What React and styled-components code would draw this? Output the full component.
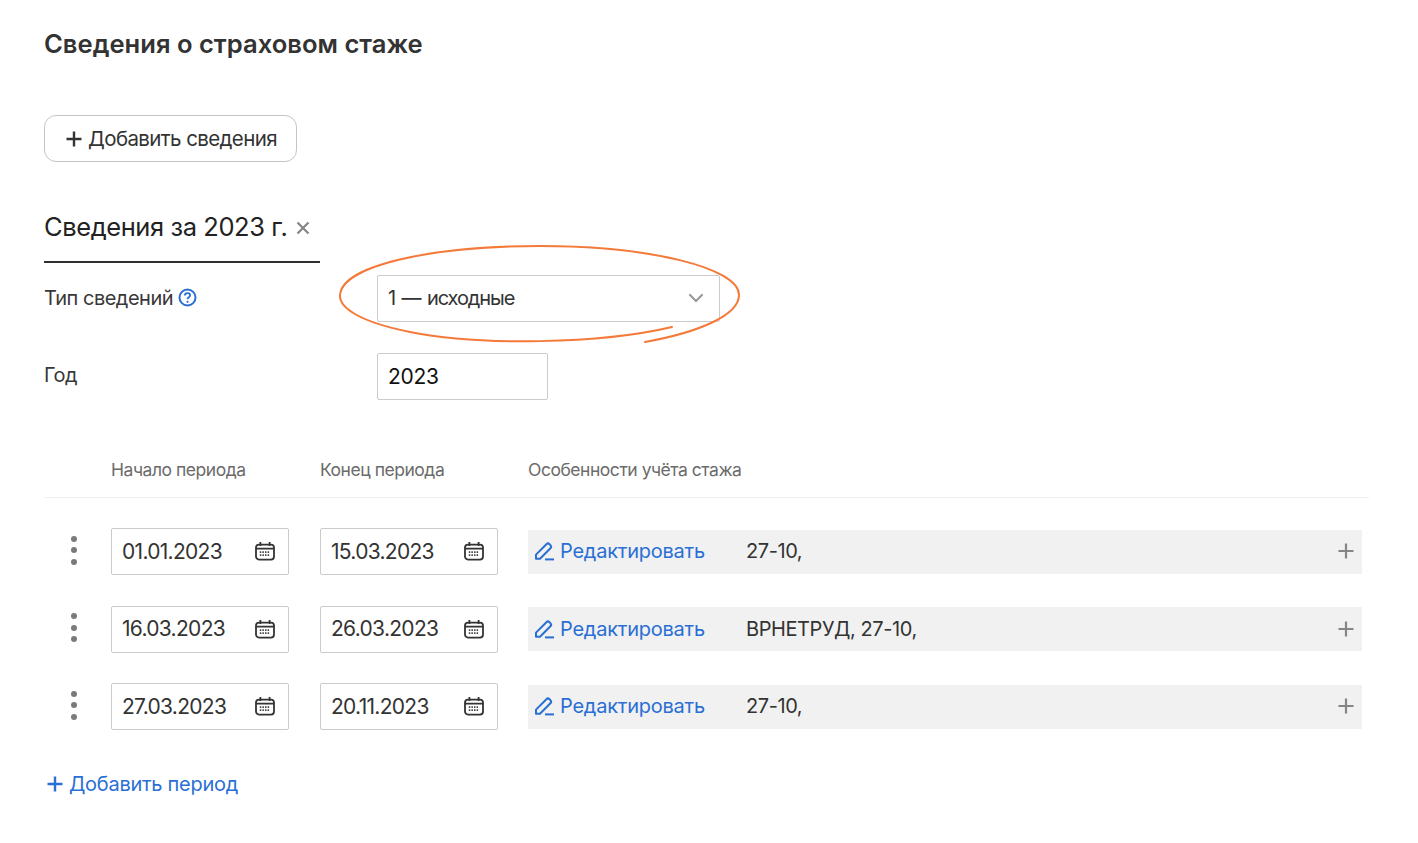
import React from 'react';
import styled, { createGlobalStyle } from 'styled-components';
import { ChevronDown } from 'lucide-react';

const GlobalStyle = createGlobalStyle`
  html, body {
    margin: 0;
    background: #fff;
  }
  body {
    font-family: Inter, "Noto Sans", sans-serif;
    color: #2b2b2b;
  }
`;

const Page = styled.main`
  position: relative;
  box-sizing: border-box;
  width: 1418px;
  height: 843px;
  padding: 27px 49px 0 44px;
  overflow: hidden;
`;

const Title = styled.h1`
  margin: 0 0 55px;
  font-size: 25.6px;
  line-height: 33px;
  font-weight: 600;
  color: #333;
`;

const AddButton = styled.button`
  display: flex;
  align-items: center;
  gap: 5px;
  box-sizing: border-box;
  width: 253px;
  height: 47px;
  padding: 0 0 0 20px;
  border: 1px solid #c4c4c4;
  border-radius: 12px;
  background: #fff;
  font: 400 20.5px Inter, sans-serif;
  letter-spacing: -0.6px;
  color: #333;
`;

const Tab = styled.div`
  display: flex;
  align-items: center;
  gap: 8px;
  box-sizing: border-box;
  width: 276px;
  height: 56px;
  margin-top: 45px;
  padding-bottom: 15px;
  border-bottom: 2px solid #2e2e2e;
  font-size: 25.5px;
  letter-spacing: -0.42px;
  color: #222;
`;

const FormRow = styled.div`
  display: grid;
  grid-template-columns: 333px 1fr;
  align-items: ${p => (p.$top ? 'start' : 'center')};
  margin-top: ${p => p.$gap}px;
`;

const Label = styled.div`
  display: flex;
  align-items: center;
  gap: 5px;
  margin-top: ${p => (p.$pad ? 0 : -2)}px;
  font-size: 20px;
  letter-spacing: -0.5px;
  color: #383838;
  padding-top: ${p => p.$pad || 0}px;
`;

const Field = styled.div`
  display: flex;
  align-items: center;
  justify-content: space-between;
  box-sizing: border-box;
  width: ${p => p.$width}px;
  height: 47px;
  padding: 0 13px 1px 10px;
  border: 1px solid #cbcbcb;
  border-radius: 2px;
  background: #fff;
  font-size: ${p => p.$size || 21}px;
  letter-spacing: ${p => p.$spacing ?? -0.7}px;
  word-spacing: ${p => p.$words || 0}px;
  color: ${p => (p.$dark ? '#111' : '#333')};
`;

const HeadRow = styled.div`
  display: grid;
  grid-template-columns: 67px 209px 208px 1fr;
  height: 47px;
  margin-top: 50px;
  border-bottom: 1px solid #f0f0f0;
  font-size: 17.5px;
  letter-spacing: -0.47px;
  line-height: 40px;
  color: #6b6b6b;
`;

const Rows = styled.div`
  display: flex;
  flex-direction: column;
  gap: 30.5px;
  margin-top: 30px;
`;

const Row = styled.div`
  display: grid;
  grid-template-columns: 67px 209px 208px 834px;
  align-items: center;
`;

const Dots = styled.div`
  display: flex;
  flex-direction: column;
  align-items: center;
  gap: 5.5px;
  width: 60px;
  margin-top: -3px;

  i {
    width: 6px;
    height: 6px;
    border-radius: 50%;
    background: #7a7a7a;
  }
`;

const EditCell = styled.div`
  display: flex;
  align-items: center;
  height: 44px;
  padding: 0 7px 1px 6px;
  box-sizing: border-box;
  background: #f1f1f1;
  font-size: 20px;
`;

const EditLink = styled.a`
  display: flex;
  align-items: center;
  gap: 4px;
  width: 212px;
  letter-spacing: -0.24px;
  color: #2a6fd4;
`;

const Codes = styled.span`
  flex: 1;
  letter-spacing: -0.42px;
  color: #333;
`;

const AddPeriod = styled.a`
  display: flex;
  align-items: center;
  gap: 5px;
  margin-top: 42px;
  padding-left: 2px;
  font-size: 20px;
  letter-spacing: -0.27px;
  color: #2a6fd4;
`;

const Annotation = styled.svg`
  position: absolute;
  left: 330px;
  top: 236px;
  pointer-events: none;
`;

const Plus = ({ size = 18, color = '#333', w = 2 }) => (
  <svg width={size} height={size} viewBox="0 0 18 18" fill="none">
    <path d="M9 1.5v15M1.5 9h15" stroke={color} strokeWidth={w} />
  </svg>
);

const Cross = () => (
  <svg width="16" height="16" viewBox="0 0 16 16" fill="none" style={{ marginTop: 3 }}>
    <path d="M2.5 2.5l11 11M13.5 2.5l-11 11" stroke="#858585" strokeWidth="2.2" />
  </svg>
);

const Help = () => (
  <svg width="19" height="19" viewBox="0 0 19 19" fill="none">
    <circle cx="9.5" cy="9.5" r="8" stroke="#2a6fd4" strokeWidth="2" />
    <path d="M6.9 7.6c0-1.5 1.1-2.4 2.6-2.4s2.6.9 2.6 2.2c0 1.9-2.6 1.9-2.6 3.8" stroke="#2a6fd4" strokeWidth="1.8" />
    <circle cx="9.5" cy="13.8" r="1.1" fill="#2a6fd4" />
  </svg>
);

const Calendar = () => (
  <svg width="20" height="20" viewBox="0 0 20 20" fill="none">
    <rect x="1" y="3.6" width="18" height="15" rx="3" stroke="#333" strokeWidth="1.8" />
    <path d="M1 7.6h18M5.4 1v4M14.6 1v4" stroke="#333" strokeWidth="1.8" />
    <path d="M4.8 11.2h10.4M4.8 14.2h10.4" stroke="#444" strokeWidth="1.7" strokeDasharray="1.5 1.1" />
  </svg>
);

const Pencil = () => (
  <svg width="22" height="20" viewBox="0 0 22 20" fill="none">
    <path d="M2 13.6L12.4 3.2a2.2 2.2 0 0 1 3.1 0l.9.9a2.2 2.2 0 0 1 0 3.1L6 17.8H2v-4.2z" stroke="#2a6fd4" strokeWidth="2" strokeLinejoin="round" />
    <path d="M11 18.4h9" stroke="#2a6fd4" strokeWidth="2" />
  </svg>
);

const periods = [
  { from: '01.01.2023', to: '15.03.2023', codes: '27-10,' },
  { from: '16.03.2023', to: '26.03.2023', codes: 'ВРНЕТРУД, 27-10,' },
  { from: '27.03.2023', to: '20.11.2023', codes: '27-10,' },
];

const App = () => {
  return (
    <Page>
      <GlobalStyle />
      <Title>Сведения о страховом стаже</Title>
      <AddButton>
        <Plus w={2.4} />
        Добавить сведения
      </AddButton>
      <Tab>
        Сведения за 2023 г.
        <Cross />
      </Tab>
      <FormRow $gap={12}>
        <Label>
          Тип сведений
          <Help />
        </Label>
        <Field $width={343} $size={20} $spacing={-1.1} $words={2}>
          1 — исходные
          <ChevronDown size={24} color="#9a9a9a" strokeWidth={2.2} style={{ marginRight: -2 }} />
        </Field>
      </FormRow>
      <FormRow $gap={31} $top>
        <Label $pad={10}>Год</Label>
        <Field $width={171} $dark $spacing={-0.3}>2023</Field>
      </FormRow>
      <HeadRow>
        <span />
        <span>Начало периода</span>
        <span>Конец периода</span>
        <span>Особенности учёта стажа</span>
      </HeadRow>
      <Rows>
        {periods.map(p => (
          <Row key={p.from}>
            <Dots><i /><i /><i /></Dots>
            <Field $width={178}>{p.from}<Calendar /></Field>
            <Field $width={178}>{p.to}<Calendar /></Field>
            <EditCell>
              <EditLink>
                <Pencil />
                Редактировать
              </EditLink>
              <Codes>{p.codes}</Codes>
              <Plus size={18} color="#858585" w={2.2} />
            </EditCell>
          </Row>
        ))}
      </Rows>
      <AddPeriod>
        <Plus size={18} color="#2a6fd4" w={2.4} />
        Добавить период
      </AddPeriod>
      <Annotation width="420" height="115" viewBox="0 0 420 115" fill="none">
        <path
          d="M342 91C270 108 150 110 80 96C30 86 10 72 10 60C10 30 100 10 210 10C320 10 409 32 409 59C409 79 370 96 315 106"
          stroke="#f47a3a"
          strokeWidth="2"
          strokeLinecap="round"
        />
      </Annotation>
    </Page>
  );
};

export default App;
